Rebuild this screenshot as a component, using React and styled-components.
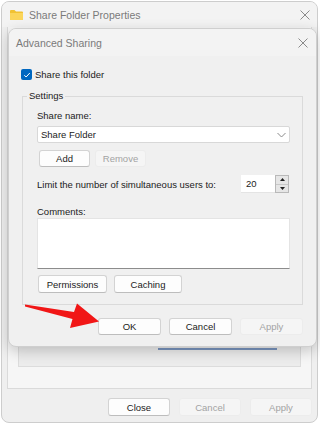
import styled, { createGlobalStyle } from "styled-components";

const Global = createGlobalStyle`
  html, body { margin: 0; padding: 0; background: #fff; }
  body { font-family: "Liberation Sans", Arial, sans-serif; color: #1b1b1b; }
  * { box-sizing: border-box; }
`;

const Page = styled.div`
  position: relative;
  width: 320px;
  height: 424px;
  padding: 1px 2px 1px 1px;
  overflow: hidden;
`;

const Window = styled.div`
  width: 317px;
  height: 422px;
  border: 1px solid #cdcdcd;
  border-radius: 8px;
  background: #efefef;
  display: flex;
  flex-direction: column;
  overflow: hidden;
`;

const TitleBar = styled.div`
  height: ${(p) => p.h}px;
  flex-shrink: 0;
  display: flex;
  align-items: center;
  padding: 0 ${(p) => p.pr}px 0 ${(p) => p.pl}px;
  background: #f3f3f3;
  gap: 6px;
`;

const TitleText = styled.span`
  flex: 1;
  font-size: 10.5px;
  color: #7a7a7a;
  white-space: nowrap;
`;

const WinBody = styled.div`
  flex: 1;
  display: flex;
  flex-direction: column;
  padding: 0 5px 6px 5px;
`;

const TabPane = styled.div`
  flex: 1;
  border: 1px solid #dadada;
  border-top: none;
  background: #f6f6f6;
  display: flex;
  flex-direction: column;
  justify-content: flex-end;
  padding: 0 10px 21px 10px;
`;

const GroupBox = styled.div`
  height: 80px;
  border: 1px solid #dcdcdc;
  background: #ececec;
  display: flex;
  align-items: flex-end;
  padding: 0 23px 16px 139px;
`;

const HiddenButton = styled.div`
  width: 119px;
  height: 20px;
  border-bottom: 2px solid #7893bd;
`;

const ButtonRow = styled.div`
  display: flex;
  justify-content: flex-end;
  gap: ${(p) => p.gap}px;
  margin-top: ${(p) => p.mt}px;
`;

const Button = styled.div`
  width: ${(p) => p.w}px;
  height: ${(p) => p.h || 17}px;
  display: flex;
  align-items: center;
  justify-content: center;
  font-size: 9.5px;
  border-radius: 3px;
  background: ${(p) => (p.disabled ? "#f5f5f5" : "#fdfdfd")};
  color: ${(p) => (p.disabled ? "#a3a3a3" : "#1b1b1b")};
  border: 1px solid ${(p) => (p.disabled ? "#ececec" : "#d3d3d3")};
  border-bottom-color: ${(p) => (p.disabled ? "#ececec" : "#bdbdbd")};
`;

const Dialog = styled.div`
  position: absolute;
  left: 8px;
  top: 28px;
  width: 309px;
  height: 319px;
  border: 1px solid #cfcfcf;
  border-radius: 8px;
  background: #f0f0f0;
  box-shadow: 0 4px 14px rgba(0, 0, 0, 0.2);
  overflow: hidden;
  display: flex;
  flex-direction: column;
`;

const DialogBody = styled.div`
  padding: 13px 13px 0 13px;
  display: flex;
  flex-direction: column;
`;

const CheckRow = styled.div`
  display: flex;
  align-items: center;
  gap: 3px;
  height: 11px;
  margin-left: -1px;
  font-size: 9.5px;
`;

const CheckBox = styled.span`
  width: 11px;
  height: 11px;
  border-radius: 2px;
  background: #0067c0;
  display: flex;
  align-items: center;
  justify-content: center;
`;

const Group = styled.fieldset`
  margin: 10px 0 0 0;
  padding: 0 12px 11px 14px;
  border: 1px solid #dadada;
  display: flex;
  flex-direction: column;
  min-width: 0;
`;

const Legend = styled.legend`
  font-size: 9.5px;
  line-height: 12px;
  padding: 0 2px;
  margin-left: -10px;
`;

const Label = styled.div`
  font-size: 9.5px;
  line-height: 12px;
  margin-top: ${(p) => p.mt || 0}px;
`;

const Combo = styled.div`
  margin-top: 4px;
  height: 17px;
  background: #fff;
  border: 1px solid #d8d8d8;
  border-radius: 2px;
  display: flex;
  align-items: center;
  justify-content: space-between;
  padding: 0 3px 0 3px;
  font-size: 9.5px;
`;

const SmallRow = styled.div`
  display: flex;
  gap: ${(p) => p.gap}px;
  margin-top: ${(p) => p.mt}px;
  margin-left: ${(p) => p.ml}px;
`;

const LimitRow = styled.div`
  margin-top: 8px;
  height: 18px;
  display: flex;
  align-items: center;
  justify-content: space-between;
  padding-right: 1px;
  font-size: 9.5px;
`;

const Spin = styled.div`
  display: flex;
  height: 18px;
`;

const SpinInput = styled.div`
  width: 34px;
  height: 18px;
  background: #fff;
  display: flex;
  align-items: center;
  padding-left: 5px;
  font-size: 9.5px;
  border-bottom: 1px solid #e4e4e4;
`;

const SpinButtons = styled.div`
  width: 14px;
  display: flex;
  flex-direction: column;
  border: 1px solid #b9b9b9;
  background: #e6e6e6;
`;

const SpinHalf = styled.div`
  flex: 1;
  display: flex;
  align-items: center;
  justify-content: center;
  & + & {
    border-top: 1px solid #c8c8c8;
  }
`;

const Comments = styled.div`
  height: 51px;
  background: #fff;
  border: 1px solid #e4e4e4;
  border-bottom: 1px solid #8c8c8c;
`;

const Arrow = styled.svg`
  position: absolute;
  left: 0;
  top: 0;
  pointer-events: none;
`;

const Close = () => (
  <svg width="10" height="10" viewBox="0 0 10 10">
    <path d="M0.5 0.5 L9.5 9.5 M9.5 0.5 L0.5 9.5" stroke="#8a8a8a" strokeWidth="1" fill="none" />
  </svg>
);

const Folder = () => (
  <svg width="13" height="10" viewBox="0 0 13 10">
    <path d="M0 1 Q0 0 1 0 L4.5 0 L6 1.5 L12 1.5 Q13 1.5 13 2.5 L13 9 Q13 10 12 10 L1 10 Q0 10 0 9 Z" fill="#f1c232" />
    <path d="M0 3 L13 3 L13 9 Q13 10 12 10 L1 10 Q0 10 0 9 Z" fill="#fbd55a" />
  </svg>
);

export default function App() {
  return (
    <>
      <Global />
      <Page>
        <Window>
          <TitleBar h={25} pl={8} pr={7}>
            <Folder />
            <TitleText>Share Folder Properties</TitleText>
            <Close />
          </TitleBar>
          <WinBody>
            <TabPane>
              <GroupBox>
                <HiddenButton />
              </GroupBox>
            </TabPane>
            <ButtonRow gap={9} mt={9}>
              <Button w={62} h={18}>Close</Button>
              <Button w={62} h={18} disabled>Cancel</Button>
              <Button w={62} h={18} disabled>Apply</Button>
            </ButtonRow>
          </WinBody>
        </Window>

        <Dialog>
          <TitleBar h={27} pl={7} pr={8}>
            <TitleText>Advanced Sharing</TitleText>
            <Close />
          </TitleBar>
          <DialogBody>
            <CheckRow>
              <CheckBox>
                <svg width="8" height="8" viewBox="0 0 8 8">
                  <path d="M1.3 4.2 L3.1 6 L6.8 2" stroke="#fff" strokeWidth="1" fill="none" />
                </svg>
              </CheckBox>
              Share this folder
            </CheckRow>
            <Group>
              <Legend>Settings</Legend>
              <Label mt={8}>Share name:</Label>
              <Combo>
                Share Folder
                <svg width="9" height="6" viewBox="0 0 9 6">
                  <path d="M0.5 1 L4.5 5 L8.5 1" stroke="#8a8a8a" strokeWidth="1" fill="none" />
                </svg>
              </Combo>
              <SmallRow gap={5} mt={7} ml={2}>
                <Button w={51}>Add</Button>
                <Button w={51} disabled>Remove</Button>
              </SmallRow>
              <LimitRow>
                Limit the number of simultaneous users to:
                <Spin>
                  <SpinInput>20</SpinInput>
                  <SpinButtons>
                    <SpinHalf>
                      <svg width="5" height="3" viewBox="0 0 5 3"><path d="M2.5 0 L5 3 L0 3 Z" fill="#222" /></svg>
                    </SpinHalf>
                    <SpinHalf>
                      <svg width="5" height="3" viewBox="0 0 5 3"><path d="M0 0 L5 0 L2.5 3 Z" fill="#222" /></svg>
                    </SpinHalf>
                  </SpinButtons>
                </Spin>
              </LimitRow>
              <Label mt={13}>Comments:</Label>
              <Comments />
              <SmallRow gap={7} mt={6} ml={1}>
                <Button w={69} h={18}>Permissions</Button>
                <Button w={68} h={18}>Caching</Button>
              </SmallRow>
            </Group>
            <ButtonRow gap={8} mt={13}>
              <Button w={63}>OK</Button>
              <Button w={63}>Cancel</Button>
              <Button w={63} disabled>Apply</Button>
            </ButtonRow>
          </DialogBody>
        </Dialog>

        <Arrow width="320" height="424" viewBox="0 0 320 424">
          <path d="M25 304.5 L74 312 L77 303.5 L99 321.5 L70 328 L72.5 319 L25 306.5 Z" fill="#f11616" />
        </Arrow>
      </Page>
    </>
  );
}
